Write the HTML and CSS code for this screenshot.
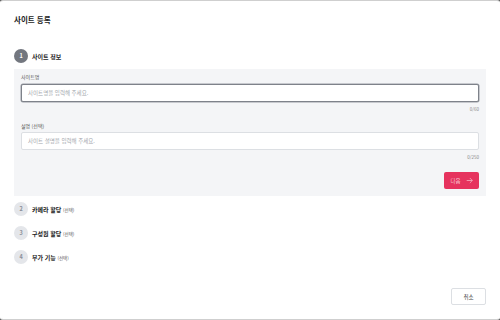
FILE: index.html
```html
<!DOCTYPE html>
<html lang="ko">
<head>
<meta charset="utf-8">
<link rel="stylesheet" href="styles.css">
</head>
<body>
<div class="modal">
  <h1 class="title">사이트 등록</h1>
  <div class="steps">
    <div class="step-head">
      <span class="circle active">1</span>
      <span class="step-label">사이트 정보</span>
    </div>
    <div class="panel">
      <label class="field-label">사이트명</label>
      <div class="input focused">사이트명을 입력해 주세요.</div>
      <div class="counter">0/60</div>
      <label class="field-label second">설명 (선택)</label>
      <div class="input">사이트 설명을 입력해 주세요.</div>
      <div class="counter">0/250</div>
      <div class="actions">
        <button class="btn-next">다음
          <svg class="arrow" viewBox="0 0 10 10" width="7" height="7"><path d="M1 5h8M5.5 1.5L9 5l-3.5 3.5" fill="none" stroke="currentColor" stroke-width="1"/></svg>
        </button>
      </div>
    </div>
    <div class="step-head sub">
      <span class="circle">2</span>
      <span class="step-label">카메라 할당 <small>(선택)</small></span>
    </div>
    <div class="step-head sub">
      <span class="circle">3</span>
      <span class="step-label">구성원 할당 <small>(선택)</small></span>
    </div>
    <div class="step-head sub">
      <span class="circle">4</span>
      <span class="step-label">부가 기능 <small>(선택)</small></span>
    </div>
  </div>
  <div class="footer">
    <button class="btn-cancel">취소</button>
  </div>
</div>
</body>
</html>
```
FILE: styles.css
```css
html, body {
  margin: 0;
  padding: 0;
  background: #5a5a5a;
}
body {
  font-family: "Noto Sans CJK KR", "Noto Sans", sans-serif;
  color: #222;
}
.modal {
  box-sizing: border-box;
  width: 500px;
  height: 320px;
  background: #fff;
  border: 1px solid #cfcfcf;
  border-left-color: #fff;
  border-right-color: #fff;
  border-radius: 3px;
  display: flex;
  flex-direction: column;
  padding: 0 13px 0 13px;
}
.title {
  margin: 14px 0 0;
  font-size: 7.5px;
  line-height: 10px;
  font-weight: 700;
  color: #222;
}
.steps {
  margin-top: 24px;
  display: flex;
  flex-direction: column;
}
.step-head {
  display: flex;
  align-items: center;
  gap: 4px;
  height: 14px;
}
.step-head.sub {
  margin-top: 10px;
}
.panel + .step-head.sub {
  margin-top: 6px;
}
.circle {
  width: 14px;
  height: 14px;
  border-radius: 50%;
  background: #e4e6ea;
  color: #8a8f98;
  font-size: 5.5px;
  font-weight: 700;
  display: flex;
  align-items: center;
  justify-content: center;
}
.circle.active {
  background: #73777f;
  color: #fff;
}
.step-label {
  font-size: 6px;
  font-weight: 700;
  color: #222;
}
.step-label small {
  font-size: 4.5px;
  font-weight: 400;
  color: #555;
}
.panel {
  margin-top: 6px;
  background: #f4f5f7;
  padding: 4px 7px 7px;
  display: flex;
  flex-direction: column;
}
.field-label {
  font-size: 5px;
  line-height: 8px;
  color: #555;
}
.field-label.second {
  margin-top: 9px;
}
.input {
  box-sizing: border-box;
  margin-top: 3px;
  height: 18px;
  background: #fff;
  border: 1px solid #dcdfe3;
  border-radius: 2px;
  padding: 0 6px;
  display: flex;
  align-items: center;
  font-size: 5.5px;
  color: #a3a7ad;
}
.field-label.second + .input {
  margin-top: 2px;
}
.input.focused {
  border: 1px solid #7e828a;
  box-shadow: 0 0 0 0.5px #9a9ea5;
}
.counter {
  margin-top: 3px;
  font-size: 4.5px;
  line-height: 8px;
  text-align: right;
  color: #888;
}
.actions {
  margin-top: 11px;
  display: flex;
  justify-content: flex-end;
}
.btn-next {
  box-sizing: border-box;
  width: 35px;
  height: 17px;
  border: none;
  border-radius: 2px;
  background: #e6335e;
  color: #f7c4d0;
  font-family: inherit;
  font-size: 5.5px;
  display: flex;
  align-items: center;
  justify-content: center;
  gap: 5px;
  padding: 0;
}
.footer {
  margin-top: auto;
  margin-bottom: 14px;
  display: flex;
  justify-content: flex-end;
}
.btn-cancel {
  box-sizing: border-box;
  width: 35px;
  height: 17px;
  background: #fff;
  border: 1px solid #dcdfe3;
  border-radius: 2px;
  font-family: inherit;
  font-size: 5.5px;
  color: #444;
  padding: 0;
}
```
